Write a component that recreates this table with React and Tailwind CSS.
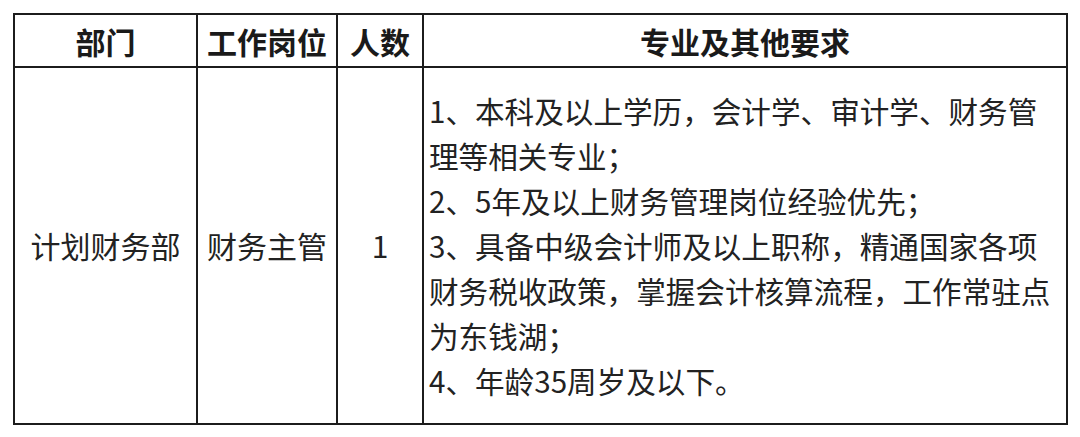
import React from 'react';

const font = { fontFamily: '"Noto Sans CJK SC", "Noto Sans", sans-serif' };

const requirements = [
  '1、本科及以上学历，会计学、审计学、财务管',
  '理等相关专业；',
  '2、5年及以上财务管理岗位经验优先；',
  '3、具备中级会计师及以上职称，精通国家各项',
  '财务税收政策，掌握会计核算流程，工作常驻点',
  '为东钱湖；',
  '4、年龄35周岁及以下。',
];

const App = () => {
  return (
    <div className="w-[1080px] h-[437px] bg-white pt-[13px] pl-[13px] text-[#1a1a1a]" style={font}>
      <table className="table-fixed border-collapse w-[1053px]">
        <colgroup>
          <col className="w-[183px]" />
          <col className="w-[140px]" />
          <col className="w-[86px]" />
          <col className="w-[644px]" />
        </colgroup>
        <thead>
          <tr className="h-[53px] text-[30px] font-bold leading-none">
            <th className="border-2 border-[#1c1c1c] p-0 text-center">部门</th>
            <th className="border-2 border-[#1c1c1c] p-0 text-center">工作岗位</th>
            <th className="border-2 border-[#1c1c1c] p-0 text-center">人数</th>
            <th className="border-2 border-[#1c1c1c] p-0 text-center">专业及其他要求</th>
          </tr>
        </thead>
        <tbody>
          <tr className="h-[357px] text-[30px] leading-[45px] text-[#222]">
            <td className="border-2 border-[#1c1c1c] p-0 text-center">计划财务部</td>
            <td className="border-2 border-[#1c1c1c] p-0 text-center">财务主管</td>
            <td className="border-2 border-[#1c1c1c] p-0 text-center">1</td>
            <td className="border-2 border-[#1c1c1c] py-0 pl-[5px] pr-0 text-left text-[29.6px]">
              {requirements.map((line) => (
                <div key={line} className="whitespace-nowrap">{line}</div>
              ))}
            </td>
          </tr>
        </tbody>
      </table>
    </div>
  );
};

export default App;
